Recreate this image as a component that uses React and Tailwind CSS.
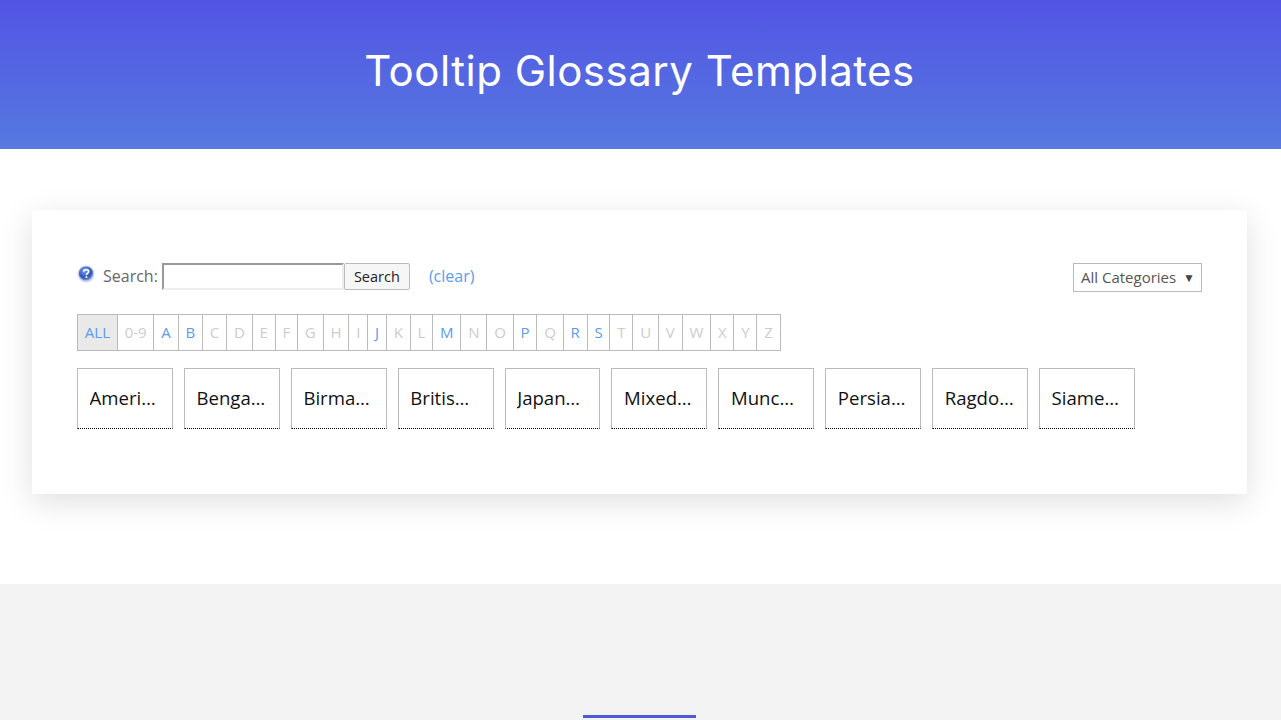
const letters = [
  ['ALL', true], ['0-9', false], ['A', true], ['B', true], ['C', false], ['D', false], ['E', false], ['F', false],
  ['G', false], ['H', false], ['I', false], ['J', true], ['K', false], ['L', false], ['M', true], ['N', false],
  ['O', false], ['P', true], ['Q', false], ['R', true], ['S', true], ['T', false], ['U', false], ['V', false],
  ['W', false], ['X', false], ['Y', false], ['Z', false]
];

const breeds = [
  'American Shorthair', 'Bengal Cat', 'Birman Cat', 'British Shorthair', 'Japanese Bobtail',
  'Mixed Breed', 'Munchkin Cat', 'Persian Cat', 'Ragdoll Cat', 'Siamese Cat'
];

function HelpIcon() {
  return (
    <svg width="18" height="18" viewBox="0 0 18 18" className="shrink-0">
      <defs>
        <radialGradient id="help" cx="40%" cy="30%" r="75%">
          <stop offset="0%" stopColor="#7c9fe8" />
          <stop offset="65%" stopColor="#2f55bd" />
          <stop offset="100%" stopColor="#8aa3dc" />
        </radialGradient>
      </defs>
      <circle cx="9" cy="9" r="8.5" fill="#c9d3ea" />
      <circle cx="9" cy="8.5" r="7" fill="url(#help)" />
      <path d="M6.6 6.6c.3-1.4 1.3-2 2.6-2 1.4 0 2.4.8 2.4 2 0 1.7-2.1 1.7-2.2 3.4" fill="none" stroke="#fff" strokeWidth="1.7" />
      <circle cx="9.4" cy="12" r="1.05" fill="#fff" />
    </svg>
  );
}

export default function App() {
  return (
    <div className="h-[720px] overflow-hidden bg-[#f3f3f3] font-['Open_Sans',sans-serif]">
      <header className="h-[149px] flex items-center justify-center pr-[2px] bg-gradient-to-b from-[#5353e4] to-[#5679df]">
        <h1 className="text-[42px] tracking-[0.5px] leading-none text-white font-['Inter',sans-serif] font-normal pb-[7px]">Tooltip Glossary Templates</h1>
      </header>

      <section className="h-[435px] bg-white pl-[32px] pr-[34px] pt-[61px]">
        <div className="h-[284px] bg-white px-[45px] pt-[53px] shadow-[0_8px_30px_rgba(0,0,0,0.13)]">
          <div className="flex items-start justify-between">
            <div className="flex items-center h-[27px] text-[16px] text-[#666]">
              <span className="mb-[5px]"><HelpIcon /></span>
              <span className="ml-[8px] mr-[4px] mb-[2px]">Search:</span>
              <input className="w-[182px] h-[27px] bg-white border-2 border-t-[#999] border-l-[#999] border-r-[#eee] border-b-[#eee]" />
              <button className="w-[66px] h-[27px] rounded-[2px] border border-[#bbb] bg-[#f6f6f6] text-[14.5px] text-[#222]">Search</button>
              <a className="ml-[19px] mb-[2px] text-[#5b9bf0]">(clear)</a>
            </div>
            <div className="flex items-center justify-between w-[129px] h-[29px] border border-[#bbb] pl-[7px] pr-[6px] text-[15px] text-[#555]">
              <span>All Categories</span>
              <span className="text-[12px] text-[#444]">▼</span>
            </div>
          </div>

          <div className="mt-[22px] flex">
            {letters.map(([l, on], i) => (
              <div
                key={l}
                className={`h-[37px] flex items-center justify-center px-[6.84px] border border-[#bbb] text-[15px] ${i > 0 ? '-ml-px' : ''} ${i === 0 ? 'bg-[#e9e9e9]' : 'bg-white'} ${on ? 'text-[#5b9bf0]' : 'text-[#ccc]'}`}
              >
                {l}
              </div>
            ))}
          </div>

          <div className="mt-[17px] flex gap-[11px]">
            {breeds.map(b => (
              <div key={b} className="w-[95.9px] h-[61px] flex items-center border border-[#bbb] border-b-black [border-bottom-style:dotted] pl-[11.6px] pr-[13px] pb-[2px] text-[18.6px] text-[#111]">
                <span className="truncate">{b}</span>
              </div>
            ))}
          </div>
        </div>
      </section>

      <footer className="h-[136px] flex justify-center items-start pt-[131px] pr-[2px]">
        <div className="w-[113px] h-[3px] bg-[#4f5bd5]"></div>
      </footer>
    </div>
  );
}
